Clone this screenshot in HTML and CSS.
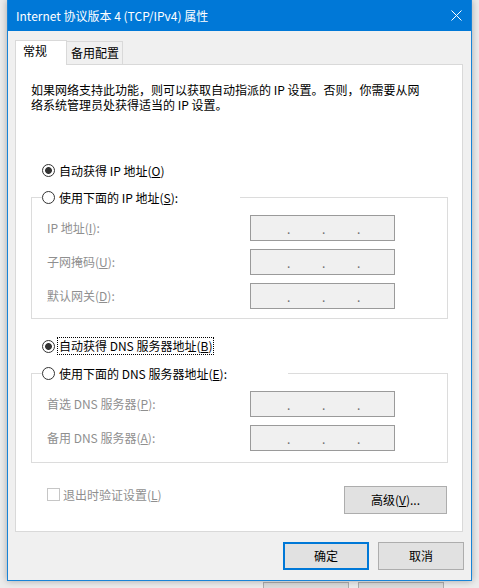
FILE: index.html
```html
<!DOCTYPE html>
<html lang="zh-CN">
<head>
    <meta charset="UTF-8">
    <title>Internet 协议版本 4 (TCP/IPv4) 属性</title>
    <link rel="stylesheet" href="styles.css">
</head>
<body>

<div class="window">
    <!-- Title Bar -->
    <div class="title-bar">
        <span class="title">Internet 协议版本 4 (TCP/IPv4) 属性</span>
        <svg class="close" width="11" height="11" viewBox="0 0 11 11">
            <path d="M0.5 0.5 L10.5 10.5 M10.5 0.5 L0.5 10.5" stroke="#fff" stroke-width="1" fill="none"/>
        </svg>
    </div>

    <div class="dialog-body">
        <!-- Tabs -->
        <div class="tabs">
            <div class="tab active">常规</div>
            <div class="tab">备用配置</div>
        </div>

        <div class="tab-panel">
            <div class="desc">
                <span>如果网络支持此功能，则可以获取自动指派的 IP 设置。否则，你需要从网</span>
                <span>络系统管理员处获得适当的 IP 设置。</span>
            </div>

            <!-- IP settings -->
            <div class="radio checked first-radio"><span class="circle"></span>自动获得 IP 地址(<u>O</u>)</div>

            <fieldset class="group">
                <legend class="ip-legend"><span class="radio"><span class="circle"></span>使用下面的 IP 地址(<u>S</u>):</span></legend>
                <div class="field-row">
                    <span class="field-label">IP 地址(<u>I</u>):</span>
                    <div class="ip-box"><span>.</span><span>.</span><span>.</span></div>
                </div>
                <div class="field-row">
                    <span class="field-label">子网掩码(<u>U</u>):</span>
                    <div class="ip-box"><span>.</span><span>.</span><span>.</span></div>
                </div>
                <div class="field-row">
                    <span class="field-label">默认网关(<u>D</u>):</span>
                    <div class="ip-box"><span>.</span><span>.</span><span>.</span></div>
                </div>
            </fieldset>

            <!-- DNS settings -->
            <div class="radio checked dns-radio"><span class="circle"></span><span class="focus">自动获得 DNS 服务器地址(<u>B</u>)</span></div>

            <fieldset class="group dns-group">
                <legend class="dns-legend"><span class="radio"><span class="circle"></span>使用下面的 DNS 服务器地址(<u>E</u>):</span></legend>
                <div class="field-row">
                    <span class="field-label">首选 DNS 服务器(<u>P</u>):</span>
                    <div class="ip-box"><span>.</span><span>.</span><span>.</span></div>
                </div>
                <div class="field-row">
                    <span class="field-label">备用 DNS 服务器(<u>A</u>):</span>
                    <div class="ip-box"><span>.</span><span>.</span><span>.</span></div>
                </div>
            </fieldset>

            <div class="bottom-row">
                <div class="checkbox-label"><span class="check-box"></span>退出时验证设置(<u>L</u>)</div>
                <div class="btn btn-advanced">高级(<u>V</u>)...</div>
            </div>
        </div>

        <!-- Dialog buttons -->
        <div class="footer">
            <div class="btn btn-ok">确定</div>
            <div class="btn">取消</div>
        </div>
    </div>
</div>

<div class="behind-buttons"><span></span><span></span></div>

</body>
</html>
```

FILE: styles.css
```css
/* Global Styling */
* {
    margin: 0;
    padding: 0;
    box-sizing: border-box;
    font-family: "Noto Sans CJK SC", "Microsoft YaHei UI", sans-serif;
}

body {
    width: 479px;
    height: 588px;
    overflow: hidden;
    background-color: #ececec;
    font-size: 12px;
    color: #000;
}

/* Window */
.window {
    width: 465px;
    margin-left: 7px;
    background: #f0f0f0;
    border: 1px solid #1883d7;
    border-top: none;
    box-shadow: 0 0 7px rgba(0, 0, 0, 0.3);
    position: relative;
}

.title-bar {
    height: 31px;
    background: #0078d7;
    color: #fff;
    display: flex;
    align-items: center;
    justify-content: space-between;
    padding: 0 9px 0 8px;
    line-height: 16px;
}

.close {
    display: block;
}

.dialog-body {
    padding-top: 9px;
}

/* Tabs */
.tabs {
    display: flex;
    align-items: flex-end;
    height: 24px;
    margin-left: 7px;
}

.tab {
    border: 1px solid #d9d9d9;
    border-bottom: none;
    line-height: 16px;
}

.tab.active {
    position: relative;
    width: 52px;
    height: 25px;
    margin-bottom: -1px;
    padding: 2px 0 0 7px;
    background: #fff;
}

.tab + .tab {
    width: 56px;
    height: 23px;
    border-left: none;
    padding: 3px 0 0 4px;
    background: #f0f0f0;
}

/* Tab Panel */
.tab-panel {
    width: 448px;
    margin-left: 7px;
    background: #fff;
    border: 1px solid #d9d9d9;
    padding: 18px 14px 17px 15px;
}

.desc span {
    display: block;
    height: 15px;
    line-height: 14px;
    white-space: nowrap;
}

/* Radio buttons */
.radio {
    display: flex;
    align-items: center;
    height: 17px;
    line-height: 16px;
    white-space: nowrap;
}

.circle {
    flex: none;
    width: 13px;
    height: 13px;
    border: 1px solid #333;
    border-radius: 50%;
    background: #fff;
    margin-right: 4px;
}

.checked .circle {
    background: radial-gradient(circle, #333 0, #333 3px, #fff 3.8px);
}

.first-radio {
    margin: 49px 0 0 11px;
}

.dns-radio {
    height: 18px;
    margin: 18px 0 0 11px;
}

.dns-radio .circle {
    margin-right: 2px;
}

.focus {
    border: 1px dotted #000;
    padding: 0 1px;
    line-height: 16px;
}

/* Group boxes */
.group {
    border: 1px solid #dcdcdc;
    margin: 10px 0 0 0;
    padding: 0 0 9px 0;
    min-width: 0;
}

.dns-group {
    padding-bottom: 11px;
}

.group legend {
    padding: 0;
    margin-left: 10px;
}

.ip-legend {
    width: 198px;
}

.dns-legend {
    width: 246px;
}

.field-row {
    display: grid;
    grid-template-columns: 203px 145px;
    align-items: center;
    padding-left: 15px;
    margin-top: 8px;
}

legend + .field-row {
    margin-top: 9px;
}

.field-label {
    color: #8f8f8f;
    line-height: 16px;
    white-space: nowrap;
}

.ip-box {
    display: flex;
    height: 26px;
    border: 1px solid #9a9a9a;
    background: #f0f0f0;
    padding: 1px 0 0 36px;
    line-height: 24px;
    color: #6d6d6d;
}

.ip-box span {
    width: 35px;
}

/* Bottom row */
.bottom-row {
    display: flex;
    justify-content: space-between;
    align-items: flex-start;
    margin-top: 23px;
    padding-left: 16px;
}

.checkbox-label {
    display: flex;
    align-items: center;
    height: 17px;
    color: #8f8f8f;
    white-space: nowrap;
}

.check-box {
    width: 13px;
    height: 13px;
    border: 1px solid #c6c6c6;
    background: #fff;
    margin-right: 3px;
}

/* Buttons */
.btn {
    width: 86px;
    height: 28px;
    background: #e1e1e1;
    border: 1px solid #adadad;
    text-align: center;
    line-height: 26px;
}

.btn-advanced {
    width: 103px;
    margin-right: 1px;
}

.btn-ok {
    border: 2px solid #0078d7;
    line-height: 24px;
}

.footer {
    display: flex;
    justify-content: flex-end;
    gap: 9px;
    padding: 10px 7px 10px 0;
}

/* Window behind */
.behind-buttons {
    display: flex;
    gap: 9px;
    padding-left: 263px;
    margin-top: 1px;
}

.behind-buttons span {
    width: 86px;
    height: 8px;
    border: 1px solid #adadad;
    border-bottom: none;
    background: #dcdcdc;
}
```
